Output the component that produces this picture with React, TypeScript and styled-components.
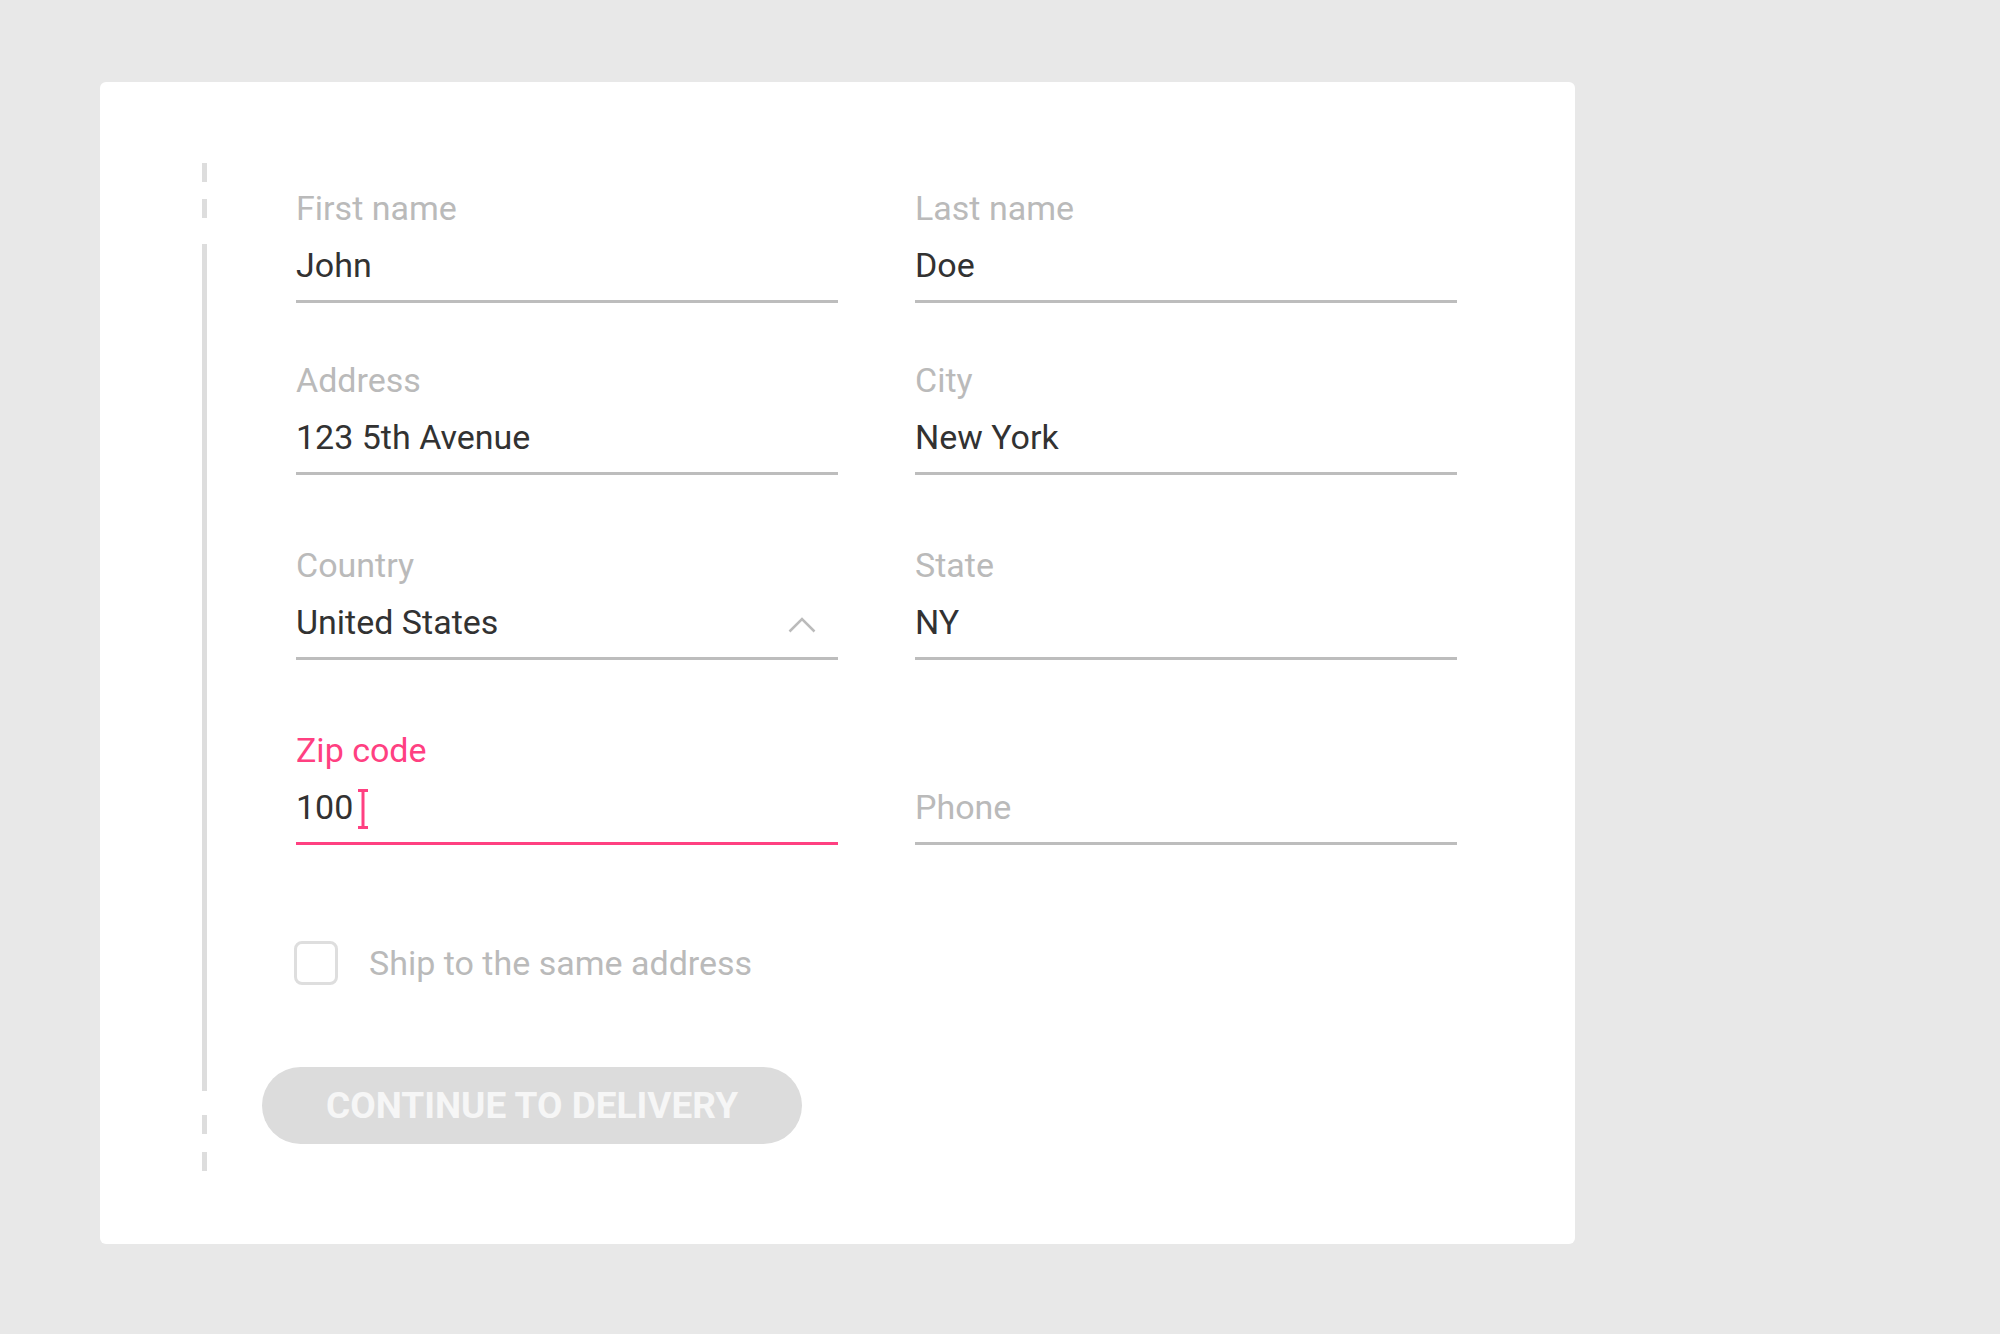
import styled, { createGlobalStyle } from "styled-components";

const GlobalStyle = createGlobalStyle`
    html, body {
        margin: 0;
        padding: 0;
        background: #e8e8e8;
        font-family: Roboto, "Noto Sans", Arial, sans-serif;
    }
`;

const Page = styled.div`
    min-height: 1334px;
    padding: 82px 0 0 100px;
    box-sizing: border-box;
`;

const Card = styled.div`
    width: 1475px;
    height: 1162px;
    box-sizing: border-box;
    background: #ffffff;
    border-radius: 6px;
    padding: 81px 0 73px 102px;
    display: flex;
    gap: 55px;
`;

const Rail = styled.div`
    width: 5px;
    display: flex;
    flex-direction: column;
`;

const RailDash = styled.div<{ $after: number }>`
    height: 19px;
    margin-bottom: ${(p) => p.$after}px;
    background: #dddddd;
`;

const RailLine = styled.div`
    flex: 1;
    margin-bottom: 24px;
    background: #dddddd;
`;

const Form = styled.div`
    flex: 1;
    padding-top: 25px;
    display: flex;
    flex-direction: column;
`;

const FieldRow = styled.div<{ $top: number }>`
    display: grid;
    grid-template-columns: 542px 542px;
    column-gap: 77px;
    margin: ${(p) => p.$top}px 0 0 34px;
`;

const Field = styled.div<{ $active?: boolean }>`
    border-bottom: 3px solid ${(p) => (p.$active ? "#ff4081" : "#bdbdbd")};
`;

const Label = styled.div<{ $active?: boolean }>`
    height: 40px;
    margin-bottom: 17px;
    font-size: 34px;
    line-height: 40px;
    color: ${(p) => (p.$active ? "#ff4081" : "#bababa")};
`;

const Value = styled.div<{ $placeholder?: boolean }>`
    height: 40px;
    padding-bottom: 15px;
    display: flex;
    align-items: center;
    font-size: 34px;
    line-height: 40px;
    color: ${(p) => (p.$placeholder ? "#bababa" : "#323232")};
`;

const Chevron = styled.svg`
    margin: 6px 22px 0 auto;
`;

const Caret = styled.svg`
    margin-left: 4px;
    margin-top: 4px;
`;

const CheckRow = styled.label`
    display: flex;
    align-items: center;
    gap: 31px;
    margin: 96px 0 0 32px;
    height: 44px;
    font-size: 34px;
    line-height: 44px;
    color: #bababa;
`;

const CheckBox = styled.span`
    width: 44px;
    height: 44px;
    box-sizing: border-box;
    border: 3px solid #dedede;
    border-radius: 8px;
`;

const Button = styled.button`
    margin-top: 82px;
    width: 540px;
    height: 77px;
    border: none;
    border-radius: 39px;
    background: #dcdcdc;
    color: #f6f6f6;
    font-family: Roboto, Arial, sans-serif;
    font-weight: 700;
    font-size: 37px;
    text-transform: uppercase;
    padding: 0;
`;

interface InputProps {
    label: string;
    value?: string;
    placeholder?: string;
    active?: boolean;
    select?: boolean;
}

const Input = ({ label, value, placeholder, active, select }: InputProps) => (
    <Field $active={active}>
        <Label $active={active}>{label}</Label>
        <Value $placeholder={!value}>
            {value || placeholder}
            {active && (
                <Caret width="12" height="40" viewBox="0 0 12 40">
                    <path d="M1 1.5h10M6 1.5v37M1 38.5h10" stroke="#ff4081" strokeWidth="3" fill="none" />
                </Caret>
            )}
            {select && (
                <Chevron width="28" height="16" viewBox="0 0 28 16">
                    <polyline points="1.5,14.5 14,2 26.5,14.5" stroke="#bbbbbb" strokeWidth="2.5" fill="none" />
                </Chevron>
            )}
        </Value>
    </Field>
);

const App = () => {
    return (
        <Page>
            <GlobalStyle />
            <Card>
                <Rail>
                    <RailDash $after={17} />
                    <RailDash $after={26} />
                    <RailLine />
                    <RailDash $after={18} />
                    <RailDash $after={0} />
                </Rail>
                <Form>
                    <FieldRow $top={0}>
                        <Input label="First name" value="John" />
                        <Input label="Last name" value="Doe" />
                    </FieldRow>
                    <FieldRow $top={57}>
                        <Input label="Address" value="123 5th Avenue" />
                        <Input label="City" value="New York" />
                    </FieldRow>
                    <FieldRow $top={70}>
                        <Input label="Country" value="United States" select />
                        <Input label="State" value="NY" />
                    </FieldRow>
                    <FieldRow $top={70}>
                        <Input label="Zip code" value="100" active />
                        <Input label="" placeholder="Phone" />
                    </FieldRow>
                    <CheckRow>
                        <CheckBox />
                        Ship to the same address
                    </CheckRow>
                    <Button>Continue to delivery</Button>
                </Form>
            </Card>
        </Page>
    );
};

export default App;
